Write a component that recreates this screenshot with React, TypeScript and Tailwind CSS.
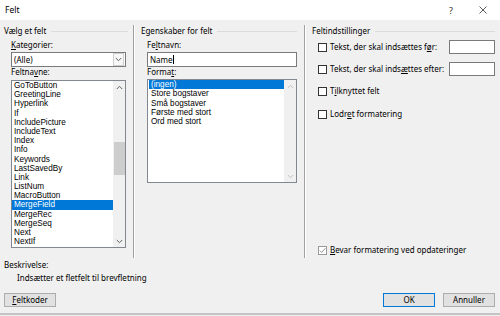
import React from "react";

const fieldNames = [
  "GoToButton",
  "GreetingLine",
  "Hyperlink",
  "If",
  "IncludePicture",
  "IncludeText",
  "Index",
  "Info",
  "Keywords",
  "LastSavedBy",
  "Link",
  "ListNum",
  "MacroButton",
  "MergeField",
  "MergeRec",
  "MergeSeq",
  "Next",
  "NextIf",
];

const formats = ["(ingen)", "Store bogstaver", "Små bogstaver", "Første med stort", "Ord med stort"];

function Key({ children }: { children: React.ReactNode }) {
  return <span className="underline underline-offset-[1px] decoration-[0.5px]">{children}</span>;
}

function Chevron({ up = false, color = "#606060" }: { up?: boolean; color?: string }) {
  return (
    <svg width="7" height="5" viewBox="0 0 7 5">
      <path d={up ? "M0.8 4 L3.5 1.3 L6.2 4" : "M0.8 1 L3.5 3.7 L6.2 1"} fill="none" stroke={color} strokeWidth="1" />
    </svg>
  );
}

function GroupHeader({ title }: { title: string }) {
  return (
    <div className="flex items-center h-[10px] mt-[6px]">
      <span className="leading-[10px] text-black whitespace-nowrap">{title}</span>
      <div className="flex-1 h-px bg-[#dcdcdc] ml-[5px]" />
    </div>
  );
}

function Checkbox({ checked = false }: { checked?: boolean }) {
  return (
    <div
      className={`w-[9px] h-[9px] shrink-0 bg-white border flex items-center justify-center ${
        checked ? "border-[#9a9a9a]" : "border-[#333333]"
      }`}
    >
      {checked && (
        <svg width="7" height="7" viewBox="0 0 7 7">
          <path d="M0.8 3.6 L2.7 5.5 L6.3 1.2" fill="none" stroke="#8a8a8a" strokeWidth="0.9" />
        </svg>
      )}
    </div>
  );
}

function Separator() {
  return (
    <div className="flex mt-[5px]">
      <div className="w-px bg-[#a0a0a0]" />
      <div className="w-px bg-white" />
    </div>
  );
}

export default function App() {
  return (
    <div className="w-[500px] h-[316px] bg-[#f0f0f0] flex flex-col overflow-hidden font-['Noto_Sans',sans-serif] text-[8px] text-black">
      {/* Title bar */}
      <div className="h-[20px] bg-white flex items-center shrink-0">
        <span className="ml-[5px] text-[8.5px] leading-none">Felt</span>
        <span className="ml-auto w-[10px] text-center text-[9px] leading-none text-[#333]">?</span>
        <svg className="ml-[23px] mr-[13px]" width="8" height="8" viewBox="0 0 8 8">
          <path d="M0.5 0.5 L7.5 7.5 M7.5 0.5 L0.5 7.5" stroke="#333" strokeWidth="0.8" />
        </svg>
      </div>

      {/* Main area */}
      <div className="flex h-[238px] shrink-0">
        {/* Vælg et felt */}
        <div className="w-[133px] pl-[4px] pr-[5px] flex flex-col">
          <GroupHeader title="Vælg et felt" />
          <div className="ml-[7px] mt-[4px] h-[10px] leading-[10px]">
            <Key>K</Key>ategorier:
          </div>
          <div className="ml-[7px] mt-[2px] w-[115px] h-[15px] bg-white border border-[#7a7a7a] flex items-center">
            <span className="ml-[2px] leading-none">(Alle)</span>
            <div className="ml-auto mr-px w-[11px] h-[13px] border border-[#cfcfcf] bg-[#f7f7f7] flex items-center justify-center">
              <Chevron />
            </div>
          </div>
          <div className="ml-[7px] h-[10px] leading-[10px]">
            Feltna<Key>v</Key>ne:
          </div>
          <div className="ml-[7px] mt-[3px] w-[115px] h-[168px] bg-white border border-[#828790] flex">
            <div className="flex-1 flex flex-col font-['Liberation_Sans',sans-serif] text-[8.2px]">
              {fieldNames.map((name) => (
                <div
                  key={name}
                  className={`h-[9.2px] leading-[9.2px] pl-[2px] whitespace-nowrap ${
                    name === "MergeField" ? "bg-[#0078d7] text-white" : ""
                  }`}
                >
                  {name}
                </div>
              ))}
            </div>
            <div className="w-[12px] bg-[#f0f0f0] flex flex-col items-center">
              <div className="h-[12px] flex items-center justify-center">
                <Chevron up />
              </div>
              <div className="mt-[49px] w-[11px] h-[33px] bg-[#cdcdcd]" />
              <div className="mt-auto h-[12px] flex items-center justify-center">
                <Chevron />
              </div>
            </div>
          </div>
        </div>

        <Separator />

        {/* Egenskaber for felt */}
        <div className="w-[169px] pl-[6px] pr-[7px] flex flex-col">
          <GroupHeader title="Egenskaber for felt" />
          <div className="ml-[6px] mt-[4px] h-[10px] leading-[10px]">
            Fe<Key>l</Key>tnavn:
          </div>
          <div className="ml-[6px] mt-[2px] w-[150px] h-[15px] bg-white border border-[#7a7a7a] flex items-center">
            <span className="ml-[2px] leading-none">Name</span>
            <div className="w-px h-[9px] bg-black" />
          </div>
          <div className="ml-[6px] h-[10px] leading-[10px]">
            Forma<Key>t</Key>:
          </div>
          <div className="ml-[6px] mt-[2px] w-[150px] h-[104px] bg-white border border-[#828790] flex">
            <div className="flex-1 flex flex-col pl-px font-['Liberation_Sans',sans-serif] text-[8.2px]">
              {formats.map((f, i) => (
                <div
                  key={f}
                  className={`h-[9.3px] leading-[9.3px] pl-[2px] whitespace-nowrap ${
                    i === 0 ? "bg-[#0078d7] text-white" : ""
                  }`}
                >
                  {f}
                </div>
              ))}
            </div>
            <div className="w-[12px] bg-[#f0f0f0] flex flex-col items-center">
              <div className="h-[12px] flex items-center justify-center">
                <Chevron up color="#c0c0c0" />
              </div>
              <div className="mt-auto h-[12px] flex items-center justify-center">
                <Chevron color="#c0c0c0" />
              </div>
            </div>
          </div>
        </div>

        <Separator />

        {/* Feltindstillinger */}
        <div className="flex-1 pl-[6px] pr-[5px] flex flex-col">
          <GroupHeader title="Feltindstillinger" />
          <div className="ml-[6px] mt-[4px] h-[14px] flex items-center">
            <Checkbox />
            <span className="ml-[3px] leading-none whitespace-nowrap">
              Tekst, der skal indsættes f<Key>ø</Key>r:
            </span>
            <div className="ml-auto w-[46px] h-[14px] bg-white border border-[#7a7a7a]" />
          </div>
          <div className="ml-[6px] mt-[8px] h-[14px] flex items-center">
            <Checkbox />
            <span className="ml-[3px] leading-none whitespace-nowrap">
              Tekst, der skal inds<Key>æ</Key>ttes efter:
            </span>
            <div className="ml-auto w-[46px] h-[14px] bg-white border border-[#7a7a7a]" />
          </div>
          <div className="ml-[6px] mt-[8px] h-[14px] flex items-center">
            <Checkbox />
            <span className="ml-[3px] leading-none">
              T<Key>i</Key>lknyttet felt
            </span>
          </div>
          <div className="ml-[6px] mt-[9px] h-[14px] flex items-center">
            <Checkbox />
            <span className="ml-[3px] leading-none">
              Lodr<Key>e</Key>t formatering
            </span>
          </div>
          <div className="ml-[6px] mt-auto mb-[1px] h-[14px] flex items-center">
            <Checkbox checked />
            <span className="ml-[3px] leading-none">
              <Key>B</Key>evar formatering ved opdateringer
            </span>
          </div>
        </div>
      </div>

      {/* Description */}
      <div className="ml-[4px] mt-[2px] h-[10px] leading-[10px]">Beskrivelse:</div>
      <div className="ml-[17px] mt-[3px] h-[10px] leading-[10px]">Indsætter et fletfelt til brevfletning</div>

      {/* Buttons */}
      <div className="mt-[10px] h-[14px] flex px-[4px] pr-[5px]">
        <button className="w-[52px] h-[14px] bg-[#e1e1e1] border border-[#adadad] leading-none">
          <Key>F</Key>eltkoder
        </button>
        <button className="ml-auto w-[52px] h-[14px] bg-[#e1e1e1] border border-[#0078d7] leading-none">
          OK
        </button>
        <button className="ml-[8px] w-[52px] h-[14px] bg-[#e1e1e1] border border-[#adadad] leading-none">
          Annuller
        </button>
      </div>

      <div className="mt-auto mb-px h-[2px] bg-[#c4c4c4]" />
    </div>
  );
}
